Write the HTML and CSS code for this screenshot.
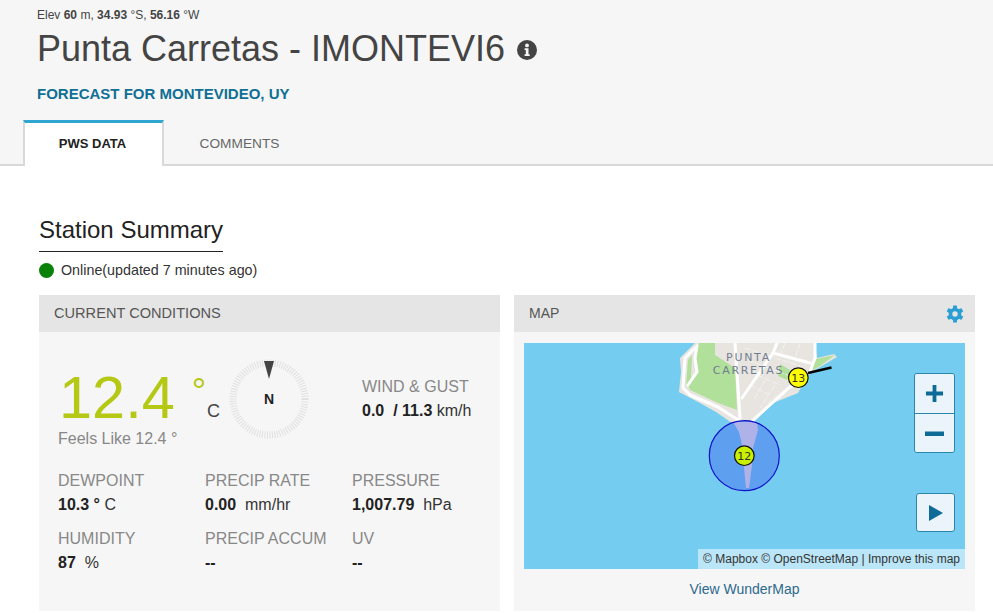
FILE: index.html
```html
<!DOCTYPE html>
<html lang="en">
<head>
<meta charset="utf-8">
<title>Punta Carretas - IMONTEVI6</title>
<link rel="stylesheet" href="styles.css">
</head>
<body>
<header class="head">
  <p class="elev">Elev <b>60</b> m, <b>34.93</b> °S, <b>56.16</b> °W</p>
  <h1 class="title">Punta Carretas - IMONTEVI6
    <svg class="info" viewBox="0 0 20 20" aria-hidden="true"><circle cx="10" cy="10" r="10" fill="#444"/><circle cx="10" cy="5.4" r="1.9" fill="#f6f6f6"/><path d="M7.6 8.3h3.9v6h1.2v1.8H7.6v-1.8h1.2v-4.2H7.6z" fill="#f6f6f6"/></svg>
  </h1>
  <a class="forecast">FORECAST FOR MONTEVIDEO, UY</a>
  <nav class="tabs">
    <a class="tab active">PWS DATA</a>
    <a class="tab">COMMENTS</a>
  </nav>
</header>
<main class="content">
  <section class="summary">
    <h2 class="summary-title">Station Summary</h2>
    <p class="status"><span class="dot"></span>Online(updated 7 minutes ago)</p>
  </section>
  <div class="cards">
    <section class="card">
      <h3 class="card-head card-head-cond">CURRENT CONDITIONS</h3>
      <div class="cond">
        <div class="top">
          <div class="temp-box">
            <div class="temp"><span class="temp-num">12.4</span><span class="temp-deg">°</span><span class="temp-unit">C</span></div>
            <div class="feels">Feels Like 12.4 °</div>
          </div>
          <div class="compass">
            <svg viewBox="0 0 80 80" class="compass-svg" aria-hidden="true">
              <circle cx="40" cy="40" r="36" fill="none" stroke="#e0e0e0" stroke-width="7" stroke-dasharray="1 1.5"/>
              <path d="M35 2h10l-5 18z" fill="#444"/>
            </svg>
            <span class="compass-dir">N</span>
          </div>
          <div class="wind">
            <div class="label">WIND &amp; GUST</div>
            <div class="value"><b>0.0</b>&nbsp; <b>/ 11.3</b> km/h</div>
          </div>
        </div>
        <div class="stats">
          <div><div class="label">DEWPOINT</div><div class="value"><b>10.3 °</b> C</div></div>
          <div><div class="label">PRECIP RATE</div><div class="value"><b>0.00</b>&nbsp; mm/hr</div></div>
          <div><div class="label">PRESSURE</div><div class="value"><b>1,007.79</b>&nbsp; hPa</div></div>
          <div><div class="label">HUMIDITY</div><div class="value"><b>87</b>&nbsp; %</div></div>
          <div><div class="label">PRECIP ACCUM</div><div class="value"><b>--</b></div></div>
          <div><div class="label">UV</div><div class="value"><b>--</b></div></div>
        </div>
      </div>
    </section>
    <section class="card">
      <h3 class="card-head card-head-map">MAP
        <svg class="gear" viewBox="0 0 20 20" aria-hidden="true">
          <g fill="#2b9fd3">
            <rect x="7.8" y="0.6" width="4.4" height="18.8" rx="0.6"/>
            <rect x="7.8" y="0.6" width="4.4" height="18.8" rx="0.6" transform="rotate(60 10 10)"/>
            <rect x="7.8" y="0.6" width="4.4" height="18.8" rx="0.6" transform="rotate(120 10 10)"/>
            <circle cx="10" cy="10" r="7"/>
          </g>
          <circle cx="10" cy="10" r="3" fill="#e5e5e5"/>
        </svg>
      </h3>
      <div class="map-wrap">
        <div class="map">
          <svg class="map-svg" viewBox="524 343 441 226" aria-hidden="true">
            <path d="M695 343L680 358L681 372L679 392L700 403L716 412L732 423H753L773 403L798 393L808 374L837 357L834 354L817 358L815 343Z" fill="#e8e5e1"/>
            <path d="M699 343H715V355L735 368L737 410L718 403L690 390L688 385L697 372L695 358Z" fill="#b0e09a"/>
            <path d="M688 360L692 355L691 378L686 386Z" fill="#b0e09a"/>
            <path d="M816 359L835 355L820 366L808 373Z" fill="#b0e09a"/>
            <path d="M780 364L790 370L787 380L778 376Z" fill="#b0e09a"/>
            <g fill="none" stroke="#f4f2ef" stroke-width="1" stroke-dasharray="6 2">
              <path d="M745 348L800 366M748 360L790 376M750 372L780 385M750 385L770 395"/>
              <path d="M785 343L780 355M800 343L795 358M765 380L755 398M775 385L760 408M790 385L768 403"/>
            </g>
            <g fill="none" stroke="#fff" stroke-width="3" stroke-linejoin="round" stroke-linecap="round">
              <path d="M695 348L685 358L683 388L690 395L718 407L738 420"/>
              <path d="M815 343L815 358L810 372L790 387L752 421"/>
              <path d="M735 343L740 418"/>
              <path d="M777 343L773 353L742 398"/>
              <path d="M773 353L810 363"/>
              <path d="M697 346L695 358L697 372L688 385"/>
            </g>
            <circle cx="744.3" cy="455.7" r="35" fill="#5f9ff0"/>
            <path d="M733 422H757L758 430L753 448L752 465L749 488H746L744 468L742 445L739 432Z" fill="#aeb2e8"/>
            <circle cx="744.3" cy="455.7" r="35" fill="none" stroke="#1010c8" stroke-width="1.2"/>
            <path d="M808 373L831.5 367.5" stroke="#000" stroke-width="2.6"/>
            <circle cx="798.3" cy="377.7" r="9.8" fill="#ffff00" stroke="#111" stroke-width="1.2"/>
            <circle cx="744.3" cy="455.7" r="9.8" fill="#c9f000" stroke="#111" stroke-width="1.2"/>
            <text x="748.5" y="361" class="map-label">PUNTA</text>
            <text x="748.5" y="374" class="map-label">CARRETAS</text>
            <text x="798.3" y="381.7" class="marker-num">13</text>
            <text x="744.3" y="459.7" class="marker-num">12</text>
          </svg>
          <div class="zoom-ctl">
            <button class="map-btn" type="button" aria-label="Zoom in"><svg viewBox="0 0 20 20"><path d="M8 1h4v7h7v4h-7v7H8v-7H1V8h7z" fill="#0e6a97"/></svg></button>
            <button class="map-btn" type="button" aria-label="Zoom out"><svg viewBox="0 0 20 20"><path d="M0 8h20v4.6H0z" fill="#0e6a97"/></svg></button>
          </div>
          <button class="map-btn play" type="button" aria-label="Play"><svg viewBox="0 0 14 16"><path d="M0 0l14 8L0 16z" fill="#0e6a97"/></svg></button>
          <div class="attrib">© Mapbox © OpenStreetMap | Improve this map</div>
        </div>
        <a class="map-link">View WunderMap</a>
      </div>
    </section>
  </div>
</main>
</body>
</html>
```
FILE: styles.css
```css
* { box-sizing: border-box; }
html, body { margin: 0; height: 613px; overflow: hidden; background: #fff; }
body { font-family: "Liberation Sans", Arial, sans-serif; color: #333; }
p, h1, h2, h3 { margin: 0; font-weight: normal; }

.head { height: 166px; background: #f6f6f6; border-bottom: 2px solid #d9d9d9; padding: 8px 0 0 37px; position: relative; }
.elev { font-size: 12px; line-height: 14px; color: #444; }
.title { font-size: 36px; line-height: 42px; color: #444; margin-top: 6px; display: flex; align-items: center; gap: 12px; white-space: nowrap; }
.info { width: 20px; height: 20px; margin-top: 2px; }
.forecast { display: block; font-size: 15px; font-weight: bold; line-height: 16px; color: #0f6f94; margin-top: 16px; }
.tabs { display: flex; margin: 18px 0 0 -14px; height: 46px; }
.tab { display: flex; align-items: center; justify-content: center; width: 141px; font-size: 13.7px; color: #666; height: 45px; padding: 2px 0 0 10px; }
.tab.active { background: #fff; color: #222; font-weight: bold; font-size: 13px; height: 46px; padding: 0 2px 3px 0; border-top: 3px solid #2ea6cf; border-left: 2px solid #d9d9d9; border-right: 2px solid #d9d9d9; }

.content { padding: 0 18px 0 39px; }
.summary { padding-top: 50px; }
.summary-title { display: inline-block; font-size: 24px; line-height: 28px; color: #222; padding-bottom: 7px; border-bottom: 1px solid #222; }
.status { display: flex; align-items: center; gap: 7px; font-size: 14.3px; line-height: 16px; color: #333; margin-top: 10px; }
.dot { width: 15px; height: 15px; border-radius: 50%; background: #0a820a; }

.cards { display: grid; grid-template-columns: 461px 461px; gap: 14px; margin-top: 17px; }
.card { background: #f6f6f6; height: 316px; }
.card-head { height: 37px; background: #e5e5e5; padding: 0 15px; font-size: 14px; line-height: 37px; color: #555; display: flex; justify-content: space-between; align-items: center; }
.card-head-cond { font-size: 14.6px; }
.card-head-map { padding: 0 11px 0 15px; }
.gear { width: 18px; height: 18px; }

.cond { padding: 32px 19px 0; }
.top { display: flex; height: 108px; }
.temp-box { width: 171px; }
.temp { display: flex; height: 66px; color: #b4c814; position: relative; }
.temp-num { font-size: 59.5px; line-height: 68px; margin-left: 1px; }
.temp-deg { font-size: 36px; line-height: 32px; margin-left: 17px; margin-top: 12px; }
.temp-unit { font-size: 18px; color: #444; position: absolute; left: 149px; top: 37px; }
.feels { font-size: 16px; line-height: 18px; color: #888; }
.compass { width: 80px; height: 80px; position: relative; margin-top: -5px; display: flex; align-items: center; justify-content: center; flex: none; }
.compass-svg { position: absolute; inset: 0; width: 80px; height: 80px; }
.compass-dir { font-size: 14px; font-weight: bold; color: #222; }
.wind { margin-left: 53px; padding-top: 14px; }
.label { font-size: 16px; line-height: 18px; color: #888; white-space: nowrap; }
.value { font-size: 16px; line-height: 18px; color: #333; margin-top: 6px; white-space: nowrap; }
.value b { color: #222; }
.stats { display: grid; grid-template-columns: 147px 147px 1fr; row-gap: 16px; }

.map-wrap { padding: 11px 10px 0; }
.map { position: relative; height: 226px; background: #74cdf0; overflow: hidden; }
.map-svg { position: absolute; inset: 0; width: 441px; height: 226px; }
.map-label { font-family: "DejaVu Sans", sans-serif; font-size: 11px; letter-spacing: 1.7px; fill: #717d90; text-anchor: middle; }
.marker-num { font-family: "DejaVu Sans", sans-serif; font-size: 11px; fill: #333; text-anchor: middle; }
.zoom-ctl { position: absolute; left: 390px; top: 30px; width: 41px; height: 80px; display: flex; flex-direction: column; border: 1px solid #2b86ab; border-radius: 3px; overflow: hidden; }
.map-btn { padding: 0; margin: 0; background: #eaf4fa; border: 0; display: flex; align-items: center; justify-content: center; }
.zoom-ctl .map-btn { height: 39px; width: 100%; }
.zoom-ctl .map-btn + .map-btn { border-top: 1px solid #2b86ab; }
.zoom-ctl svg { width: 19px; height: 19px; }
.play { position: absolute; left: 392px; top: 150px; width: 39px; height: 39px; border: 1px solid #2b86ab; border-radius: 3px; }
.play svg { width: 14px; height: 16px; }
.attrib { position: absolute; right: 0; bottom: 0; height: 20px; padding: 0 5px; font-size: 12px; line-height: 20px; color: #333; background: rgba(255,255,255,.5); white-space: nowrap; }
.map-link { display: block; text-align: center; font-size: 14px; line-height: 16px; color: #2c6a8e; margin-top: 12px; }
```
